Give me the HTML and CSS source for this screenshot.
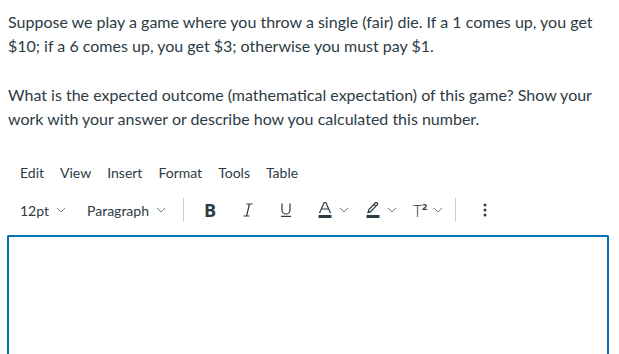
FILE: index.html
```html
<!DOCTYPE html>
<html lang="en">
<head>
    <meta charset="UTF-8">
    <title>Quiz Question</title>
    <link rel="stylesheet" href="styles.css">
</head>
<body>

<div class="question">
    <p>Suppose we play a game where you throw a single (fair) die. If a 1 comes up, you get $10; if a 6 comes up, you get $3; otherwise you must pay $1.</p>
    <p>What is the expected outcome (mathematical expectation) of this game? Show your work with your answer or describe how you calculated this number.</p>
</div>

<div class="editor">
    <div class="menubar">
        <span>Edit</span>
        <span>View</span>
        <span>Insert</span>
        <span>Format</span>
        <span>Tools</span>
        <span>Table</span>
    </div>

    <div class="toolbar">
        <span class="select">12pt <svg class="chev" viewBox="0 0 10 6"><path d="M1 1l4 4 4-4"/></svg></span>
        <span class="select">Paragraph <svg class="chev" viewBox="0 0 10 6"><path d="M1 1l4 4 4-4"/></svg></span>

        <div class="sep"></div>

        <span class="btn bold">B</span>
        <span class="btn">
            <svg width="12" height="14" viewBox="0 0 12 14"><path d="M4.5 1h6M1.5 13h6M7.5 1l-3 12" class="stroke"/></svg>
        </span>
        <span class="btn">
            <svg width="12" height="14" viewBox="0 0 12 14"><path d="M2 0.5v6.5a4 4 0 0 0 8 0V0.5M1 13.3h10" class="stroke"/></svg>
        </span>
        <span class="btn split first">
            <svg width="16" height="16" viewBox="0 0 16 16"><path d="M2.5 11L7.2 0.5h1.6L13.5 11M4.3 7h7.4" class="stroke"/><rect x="1.5" y="13" width="13" height="3" fill="#2d3b45"/></svg>
            <svg class="chev" viewBox="0 0 10 6"><path d="M1 1l4 4 4-4"/></svg>
        </span>
        <span class="btn split">
            <svg width="16" height="16" viewBox="0 0 16 16"><path d="M3 10.5l0.8-3L10.3 1a1.3 1.3 0 0 1 1.9 1.9L5.7 9.4zM9 2.3l1.8 1.8M3 10.5h2.4" class="stroke"/><rect x="1.5" y="13" width="13" height="3" fill="#2d3b45"/></svg>
            <svg class="chev" viewBox="0 0 10 6"><path d="M1 1l4 4 4-4"/></svg>
        </span>
        <span class="btn split">
            <span class="sup">T<sup>2</sup></span>
            <svg class="chev" viewBox="0 0 10 6"><path d="M1 1l4 4 4-4"/></svg>
        </span>

        <div class="sep last"></div>

        <span class="btn">
            <svg width="4" height="14" viewBox="0 0 4 14"><circle cx="2" cy="2" r="1.5"/><circle cx="2" cy="7" r="1.5"/><circle cx="2" cy="12" r="1.5"/></svg>
        </span>
    </div>

    <div class="content"></div>
</div>

</body>
</html>
```

FILE: styles.css
```css
body {
    font-family: Lato, "Liberation Sans", sans-serif;
    margin: 0;
    padding: 0;
    color: #2d3b45;
    background: #fff;
}

.question {
    padding: 0 8px;
    font-size: 16px;
    line-height: 24px;
}

.question p {
    margin: 10px 0 25px;
}

.question p:last-child {
    margin-bottom: 0;
}

.editor {
    margin: 29px 0 0 7px;
    width: 602px;
}

.menubar {
    display: flex;
    gap: 16px;
    align-items: center;
    height: 24px;
    padding-left: 13px;
    font-size: 14px;
}

.toolbar {
    display: flex;
    align-items: center;
    height: 38px;
    margin-top: 7px;
    padding-left: 13px;
    font-size: 14px;
}

.select {
    display: flex;
    align-items: center;
    gap: 7px;
    margin-right: 21px;
}

.select + .select {
    margin-right: 17px;
}

.chev {
    width: 10px;
    height: 6px;
    fill: none;
    stroke: #73818c;
    stroke-width: 1;
}

.sep {
    width: 1px;
    height: 24px;
    background: #c7cdd1;
    margin-right: 7px;
}

.sep.last {
    margin: 0 10px 0 4px;
}

.btn {
    display: flex;
    align-items: center;
    justify-content: center;
    width: 38px;
    height: 28px;
}

.btn svg circle {
    fill: #2d3b45;
}

.stroke {
    fill: none;
    stroke: #2d3b45;
    stroke-width: 1.2;
}

.split {
    width: auto;
    gap: 6px;
    padding: 0 8px;
}

.split.first {
    padding-left: 12px;
}

.bold {
    font-family: "Open Sans", sans-serif;
    font-weight: 700;
    font-size: 18px;
}

.sup {
    font-family: "Open Sans", sans-serif;
    font-size: 17px;
    font-weight: 300;
    line-height: 1;
}

.sup sup {
    font-size: 9px;
    font-weight: 700;
}

.content {
    margin-top: 6px;
    height: 130px;
    border: 2px solid #0374b5;
    border-bottom: none;
    border-radius: 2px 2px 0 0;
}
```
